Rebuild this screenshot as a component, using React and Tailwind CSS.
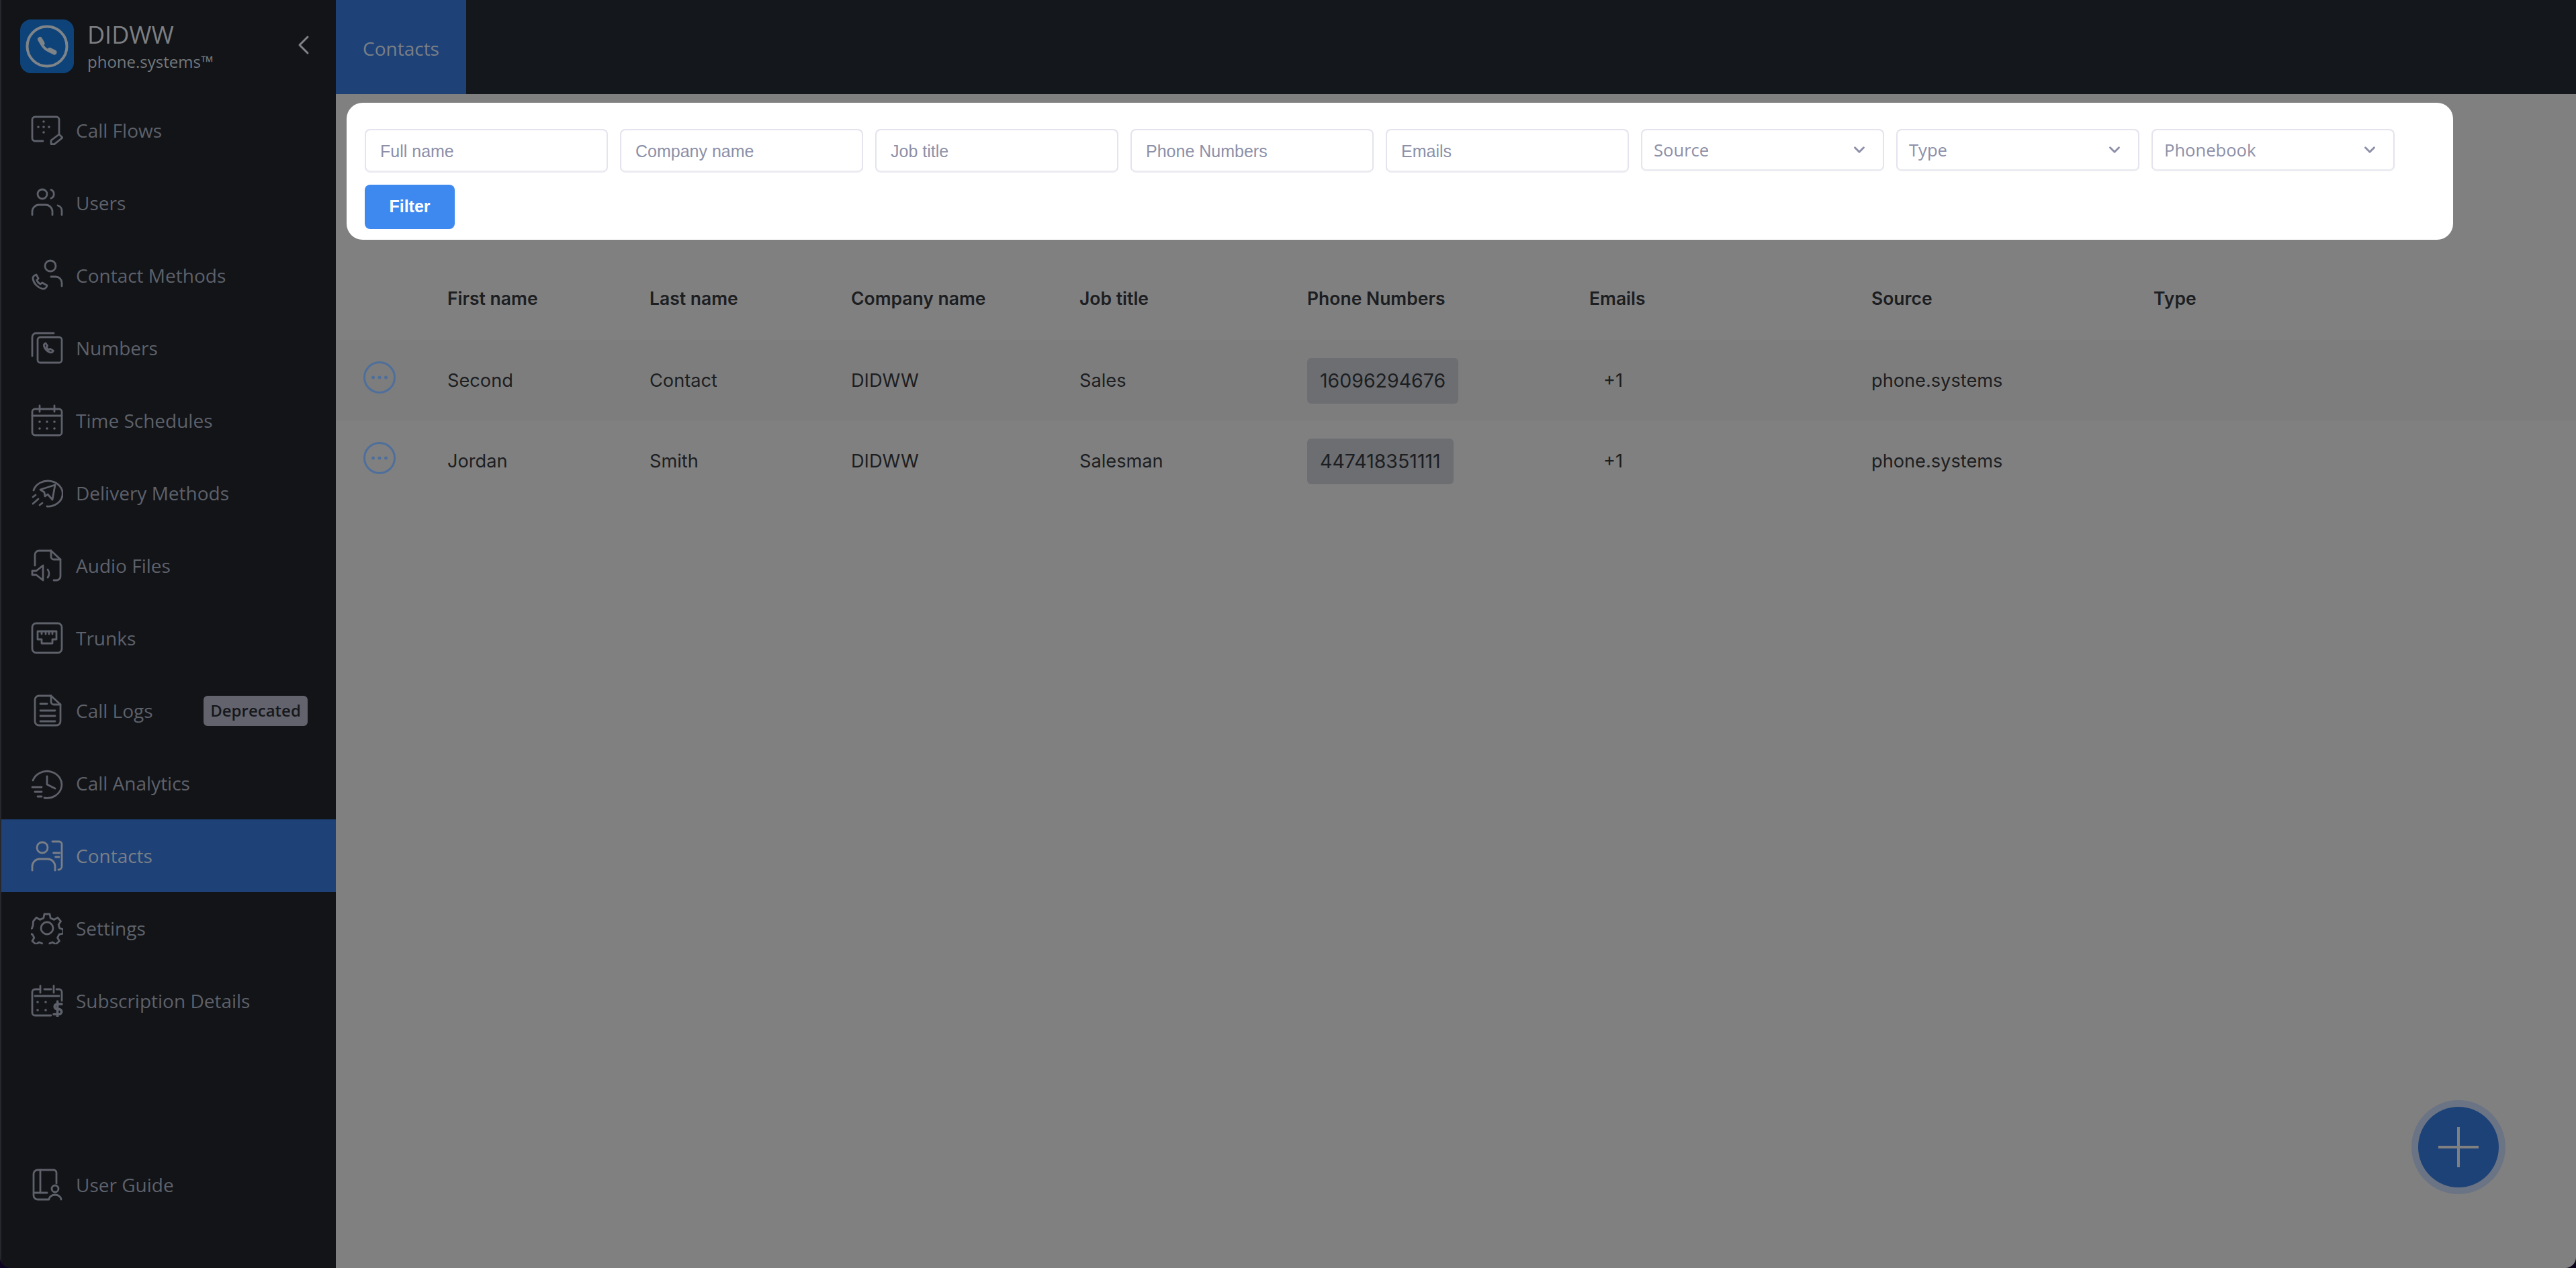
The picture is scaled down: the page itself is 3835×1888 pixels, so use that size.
import React from 'react';
import { ChevronLeft, ChevronDown } from 'lucide-react';

const sans = 'font-["Open_Sans",sans-serif]';

// sidebar icons, all drawn on a 24 box
const Ico = ({ children }) => (
    <svg viewBox="0 0 24 24" fill="none" stroke="currentColor" strokeWidth="1.4" strokeLinecap="round" strokeLinejoin="round" className="w-[48px] h-[48px] shrink-0">
        {children}
    </svg>
);

const icons = {
    flows: <Ico><path d="M9 20H3a2 2 0 0 1-2-2V4a2 2 0 0 1 2-2h16a2 2 0 0 1 2 2v11" /><path d="M5.500 9.500h.01M9.500 9.500h.01M13.500 9.500h.01M9.500 5.500h.01M9.500 13.500h.01" strokeWidth="1.8" /><path d="M15 19.500l6-4.500 2.500 2.500-6 4.800h-2.500z" /></Ico>,
    users: <Ico><circle cx="8.500" cy="5.500" r="3.500" /><path d="M15 2.300a3.400 3.400 0 0 1 0 6.300" /><path d="M1 21v-2.500a5 5 0 0 1 5-5h5a5 5 0 0 1 5 5V21" /><path d="M20 14a4 4 0 0 1 3 4v3" /></Ico>,
    methods: <Ico><circle cx="14.500" cy="5" r="4" /><path d="M15 13h3.500a4.500 4.500 0 0 1 4.500 4.500V20" /><path d="M4 11.500c-1.500 .5-2.700 1.500-2.500 3 .5 3.500 3.500 6.500 7 7.500 1.800 .5 3.300-1 3.500-2.500l-3.500-2-1.500 1c-1.300-.7-2.200-1.800-2.600-3l1.200-1.200z" /></Ico>,
    numbers: <Ico><path d="M1 18V4a3 3 0 0 1 3-3h13" /><rect x="5" y="4" width="18" height="19" rx="2" /><path d="M11 8.500c-1 .4-1.500 1-1.300 2 .5 2.300 2.500 4.300 4.800 4.900 1 .2 1.800-.4 2.200-1.300l-2.400-1.400-1 .7c-.8-.5-1.400-1.100-1.800-2l.8-.9z" /></Ico>,
    schedules: <Ico><rect x="1" y="3.500" width="22" height="19.500" rx="2" /><path d="M1 8.500h22M6.500 1v4.500M17.500 1v4.500" /><path d="M6.500 13h.01M12 13h.01M17.500 13h.01M6.500 18h.01M12 18h.01M17.500 18h.01" strokeWidth="1.8" /></Ico>,
    delivery: <Ico><path d="M2 10a11 9.500 0 1 1 10 12" /><path d="M7 9.500l11-3.500-2 11-3.500-4-2 1.500-.5-3z" /><path d="M1.500 15l2-1.500M1.500 20l4-3.500M6.500 21l2-1.500" /></Ico>,
    audio: <Ico><path d="M3 12V4a3 3 0 0 1 3-3h9l7 6.500V20a3 3 0 0 1-3 3h-2" /><path d="M15 1v4.500a2 2 0 0 0 2 2h5" /><path d="M1 16v3h3l5 4V12l-5 4z" /><path d="M12.500 15a5 5 0 0 1 0 6" /></Ico>,
    trunks: <Ico><rect x="1" y="1" width="22" height="22" rx="3" /><path d="M5 7h14v6h-3v3H8v-3H5z" /><path d="M8 7v2M11 7v2M13.500 7v2M16 7v2" /></Ico>,
    logs: <Ico><path d="M15 1H6a3 3 0 0 0-3 3v16a3 3 0 0 0 3 3h13a3 3 0 0 0 3-3V7.500z" /><path d="M15 1v4.500a2 2 0 0 0 2 2h5" /><path d="M7 7h5M7 12h11M7 16h11M7 20h11" /></Ico>,
    analytics: <Ico><path d="M1.500 10a11 10 0 1 1 8.500 13" /><path d="M12 7v6l6 3" /><path d="M1 15h7M3 18.500h5M5 22h3" /></Ico>,
    contacts: <Ico><circle cx="8.500" cy="6" r="4" /><path d="M1 23v-3a5.500 5.500 0 0 1 5.500-5.500h6a5.500 5.500 0 0 1 5.500 5.500v3" /><path d="M16 1.500h5a2 2 0 0 1 2 2V20a2.500 2.500 0 0 1-2.500 2.500" /><path d="M16.800 10h4.700M18.300 13h2.700" /></Ico>,
    settings: <Ico><circle cx="12" cy="12" r="4.500" /><path d="M10 1.500h4l.6 3 2.700 1.200 2.600-1.600 2.400 2.800-1.700 2.500.7 2.600 2.700 1-.0 3-2.900.6-1.300 2.500 1.400 2.500-2.800 2.400-2.300-1.500-2.100.8-.9 2.700h-4l-.9-2.700-2.100-.8-2.300 1.500-2.800-2.400 1.400-2.500-1.300-2.500-2.900-.6v-3l2.700-1 .7-2.600L1.700 6.900 4.100 4.100l2.600 1.600 2.700-1.200z" /></Ico>,
    billing: <Ico><path d="M6 3.500H3a2 2 0 0 0-2 2V21a2 2 0 0 0 2 2h12" /><path d="M19 3.500h2a2 2 0 0 1 2 2V12" /><path d="M10 3.500h5M7 1v5M17 1v5M3 8.500h18" /><path d="M5 13h.01M11 13h.01M5 19h.01M11 19h.01" strokeWidth="1.8" /><path d="M23 14.500h-3.500a1.800 1.800 0 0 0 0 3.800h1.500a1.800 1.800 0 0 1 0 3.700h-4M19.800 12.500v11.500" strokeWidth="1.800" /></Ico>,
    guide: <Ico><path d="M19 11V3a2 2 0 0 0-2-2H5a3 3 0 0 0-3 3v16a3 3 0 0 0 3 3h8" /><path d="M7 1v17H3" /><path d="M7 18h5" /><circle cx="18" cy="15" r="2.500" /><path d="M13.500 23a4.500 3.500 0 0 1 9 0" /></Ico>,
};

const menu = [
    { label: 'Call Flows', icon: 'flows' },
    { label: 'Users', icon: 'users' },
    { label: 'Contact Methods', icon: 'methods' },
    { label: 'Numbers', icon: 'numbers' },
    { label: 'Time Schedules', icon: 'schedules' },
    { label: 'Delivery Methods', icon: 'delivery' },
    { label: 'Audio Files', icon: 'audio' },
    { label: 'Trunks', icon: 'trunks' },
    { label: 'Call Logs', icon: 'logs', badge: 'Deprecated' },
    { label: 'Call Analytics', icon: 'analytics' },
    { label: 'Contacts', icon: 'contacts', active: true },
    { label: 'Settings', icon: 'settings' },
    { label: 'Subscription Details', icon: 'billing' },
];

const rows = [
    { first: 'Second', last: 'Contact', company: 'DIDWW', job: 'Sales', phone: '16096294676', dark: true },
    { first: 'Jordan', last: 'Smith', company: 'DIDWW', job: 'Salesman', phone: '447418351111' },
];

function MenuItem({ item }) {
    return (
        <div className={`h-[108px] flex items-center pl-[44px] pr-[42px] gap-[19px] ${item.active ? 'bg-[#1e4278] text-[#7b7f86]' : 'text-[#5e616a]'}`}>
            {icons[item.icon]}
            <span className="text-[28px] flex-1">{item.label}</span>
            {item.badge && (
                <span className="w-[155px] h-[45px] flex items-center justify-center rounded-[6px] bg-[#62636c] text-[#16181c] text-[24px] font-semibold">{item.badge}</span>
            )}
        </div>
    );
}

function Sidebar() {
    return (
        <aside className={`w-[500px] shrink-0 h-full flex flex-col bg-[#121418] border-l-2 border-[#26282d] ${sans}`}>
            <div className="h-[140px] shrink-0 flex items-center pl-[28px] pr-[24px] pb-[2px]">
                <div className="w-[80px] h-[80px] rounded-[16px] bg-[#0e437a]">
                    <svg viewBox="0 0 80 80" className="w-[80px] h-[80px]" fill="none" stroke="#7f8488" strokeLinecap="round">
                        <circle cx="40" cy="40" r="29.500" strokeWidth="4" />
                        <path d="M31 32C32 40 39 47 48 48" strokeWidth="4" />
                        <path d="M29.500 29.500L33 35.500" strokeWidth="7" />
                        <path d="M44 45.500L51 49" strokeWidth="7" />
                    </svg>
                </div>
                <div className="ml-[20px] flex-1 flex flex-col">
                    <span className="text-[36px] leading-[46px] text-[#7d7f83]">DIDWW</span>
                    <span className="text-[24px] leading-[34px] text-[#75787c]">phone.systems™</span>
                </div>
                <ChevronLeft className="w-[48px] h-[48px] text-[#808387] mb-[4px]" strokeWidth={1.5} />
            </div>
            <nav className="flex-1 flex flex-col">
                {menu.map((item) => <MenuItem key={item.label} item={item} />)}
            </nav>
            <div className="pb-[70px]">
                <MenuItem item={{ label: 'User Guide', icon: 'guide' }} />
            </div>
        </aside>
    );
}

const TextFilter = ({ label }) => (
    <div className="w-[362px] h-[65px] flex items-center pl-[21px] pt-[3px] rounded-[8px] border-2 border-b-[3px] border-[#e4e3ee] border-b-[#ebebf2] bg-white text-[25px] text-[#8d90a8] font-['Liberation_Sans',sans-serif]">
        {label}
    </div>
);

const SelectFilter = ({ label }) => (
    <div className={`w-[362px] h-[63px] flex items-center justify-between pl-[17px] pr-[22px] rounded-[8px] border-2 border-b-[3px] border-[#e4e3ee] border-b-[#ebebf2] bg-white text-[25.6px] text-[#8d90a8] ${sans}`}>
        <span className="pt-[3px]">{label}</span>
        <ChevronDown className="w-[26px] h-[26px]" strokeWidth={2.7} />
    </div>
);

const gridCols = 'grid grid-cols-[166px_301px_300px_340px_339px_420px_420px_420px_1fr] items-center';

function ContactsTable() {
    return (
        <div className="mt-[23px] font-['Inter',sans-serif] text-[27.2px] text-[#1c1e22]">
            <div className={`${gridCols} h-[126px] pt-[4px] text-[26.5px] font-semibold`}>
                <span />
                <span>First name</span>
                <span>Last name</span>
                <span>Company name</span>
                <span>Job title</span>
                <span>Phone Numbers</span>
                <span>Emails</span>
                <span>Source</span>
                <span>Type</span>
            </div>
            {rows.map((r) => (
                <div key={r.phone} className={`${gridCols} h-[120px] pt-[2px] ${r.dark ? 'bg-[#7d7d7d]' : ''}`}>
                    <span className="pl-[41px] pb-[10px]">
                        <svg viewBox="0 0 48 48" className="w-[48px] h-[48px]" fill="none">
                            <circle cx="24" cy="24" r="22.500" stroke="#4f6f9b" strokeWidth="3" />
                            <circle cx="14.500" cy="24" r="2.500" fill="#4f6f9b" />
                            <circle cx="24" cy="24" r="2.500" fill="#4f6f9b" />
                            <circle cx="33.500" cy="24" r="2.500" fill="#4f6f9b" />
                        </svg>
                    </span>
                    <span>{r.first}</span>
                    <span>{r.last}</span>
                    <span>{r.company}</span>
                    <span>{r.job}</span>
                    <span>
                        <span className="inline-flex items-center h-[68px] px-[19px] rounded-[6px] bg-[#6c6e72] text-[28.5px]">{r.phone}</span>
                    </span>
                    <span className="pl-[21px]">+1</span>
                    <span>phone.systems</span>
                    <span />
                </div>
            ))}
        </div>
    );
}

export default function App() {
    return (
        <div className="w-full h-screen bg-[#0c0320] overflow-hidden">
            <div className="w-full h-full flex rounded-b-[16px] overflow-hidden">
                <Sidebar />
                <main className="relative flex-1 h-full flex flex-col bg-[#808080]">
                    <header className="h-[140px] shrink-0 flex bg-[#14171b]">
                        <div className={`w-[194px] pt-[3px] flex items-center justify-center bg-[#1e4278] text-[28px] text-[#7b7f86] ${sans}`}>Contacts</div>
                    </header>
                    <section className="ml-[16px] mt-[13px] w-[3136px] h-[204px] rounded-[24px] bg-white pt-[39px] px-[27px]">
                        <div className="flex gap-[18px]">
                            <TextFilter label="Full name" />
                            <TextFilter label="Company name" />
                            <TextFilter label="Job title" />
                            <TextFilter label="Phone Numbers" />
                            <TextFilter label="Emails" />
                            <SelectFilter label="Source" />
                            <SelectFilter label="Type" />
                            <SelectFilter label="Phonebook" />
                        </div>
                        <button className="mt-[18px] w-[134px] h-[66px] rounded-[8px] bg-[#3e89f0] text-white text-[25px] font-bold font-['Liberation_Sans',sans-serif]">Filter</button>
                    </section>
                    <ContactsTable />
                    <button className="absolute right-[115px] bottom-[120px] w-[120px] h-[120px] rounded-full bg-[#1d4277] ring-[10px] ring-[#6b7484] flex items-center justify-center">
                        <svg viewBox="0 0 60 60" className="w-[60px] h-[60px]">
                            <path d="M30 0v60M0 30h60" stroke="#808080" strokeWidth="4" />
                        </svg>
                    </button>
                </main>
            </div>
        </div>
    );
}
